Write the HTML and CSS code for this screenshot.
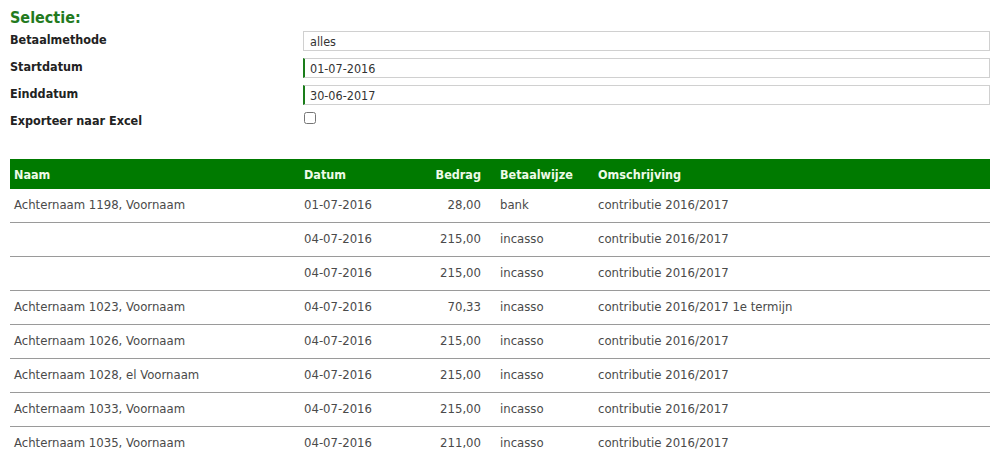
FILE: index.html
```html
<!DOCTYPE html>
<html lang="nl">
<head>
<meta charset="utf-8">
<title>Selectie</title>
<link rel="stylesheet" href="styles.css">
</head>
<body>
<h2 class="title">Selectie:</h2>
<div class="form">
  <label class="lbl">Betaalmethode</label>
  <div class="field"><input class="inp" type="text" value="alles"></div>
  <label class="lbl">Startdatum</label>
  <div class="field"><input class="inp inp-date" type="text" value="01-07-2016"></div>
  <label class="lbl">Einddatum</label>
  <div class="field"><input class="inp inp-date" type="text" value="30-06-2017"></div>
  <label class="lbl">Exporteer naar Excel</label>
  <div class="field"><input class="chk" type="checkbox"></div>
</div>
<table class="grid">
  <colgroup>
    <col class="c-naam"><col class="c-datum"><col class="c-bedrag"><col class="c-wijze"><col>
  </colgroup>
  <thead>
    <tr><th>Naam</th><th>Datum</th><th class="num">Bedrag</th><th>Betaalwijze</th><th>Omschrijving</th></tr>
  </thead>
  <tbody>
    <tr><td>Achternaam 1198, Voornaam</td><td>01-07-2016</td><td class="num">28,00</td><td>bank</td><td>contributie 2016/2017</td></tr>
    <tr><td></td><td>04-07-2016</td><td class="num">215,00</td><td>incasso</td><td>contributie 2016/2017</td></tr>
    <tr><td></td><td>04-07-2016</td><td class="num">215,00</td><td>incasso</td><td>contributie 2016/2017</td></tr>
    <tr><td>Achternaam 1023, Voornaam</td><td>04-07-2016</td><td class="num">70,33</td><td>incasso</td><td>contributie 2016/2017 1e termijn</td></tr>
    <tr><td>Achternaam 1026, Voornaam</td><td>04-07-2016</td><td class="num">215,00</td><td>incasso</td><td>contributie 2016/2017</td></tr>
    <tr><td>Achternaam 1028, el Voornaam</td><td>04-07-2016</td><td class="num">215,00</td><td>incasso</td><td>contributie 2016/2017</td></tr>
    <tr><td>Achternaam 1033, Voornaam</td><td>04-07-2016</td><td class="num">215,00</td><td>incasso</td><td>contributie 2016/2017</td></tr>
    <tr><td>Achternaam 1035, Voornaam</td><td>04-07-2016</td><td class="num">211,00</td><td>incasso</td><td>contributie 2016/2017</td></tr>
  </tbody>
</table>
</body>
</html>
```
FILE: styles.css
```css
html, body {
  margin: 0;
  padding: 0;
  background: #fff;
}
body {
  padding: 8px 8px 0 10px;
  font-family: "DejaVu Sans Condensed", "DejaVu Sans", sans-serif;
  font-size: 13px;
  color: #333;
}
.title {
  margin: 0;
  font-size: 16px;
  font-weight: bold;
  color: #237a1e;
  line-height: 19px;
}
.form {
  display: grid;
  grid-template-columns: 293px 1fr;
  row-gap: 7px;
  margin-top: 4px;
  width: 980px;
}
.lbl {
  font-weight: bold;
  color: #222;
  font-size: 12.5px;
  line-height: 20px;
  margin-top: -1px;
}
.field {
  display: flex;
  align-items: flex-start;
  height: 20px;
}
.inp {
  box-sizing: border-box;
  width: 100%;
  height: 20px;
  margin: 0;
  border: 1px solid #d0d0d0;
  padding: 0 6px;
  font-family: inherit;
  font-size: 12.5px;
  color: #333;
  background: #fff;
  outline: none;
}
.inp-date {
  border-left: 2px solid #1a7d1a;
  padding-left: 5px;
}
.chk {
  margin: 0 0 0 1px;
  width: 12px;
  height: 12px;
}
.grid {
  margin-top: 27px;
  width: 980px;
  border-collapse: collapse;
  table-layout: fixed;
}
.c-naam { width: 290px; }
.c-datum { width: 110px; }
.c-bedrag { width: 86px; }
.c-wijze { width: 98px; }
.grid th {
  background: #007a00;
  color: #eefbe8;
  font-weight: bold;
  text-align: left;
  height: 30px;
  padding: 0 4px;
  font-size: 12.5px;
}
.grid td {
  height: 31px;
  padding: 0 4px 2px 4px;
  border-bottom: 1px solid #9a9a9a;
  color: #4a4a4a;
  white-space: nowrap;
}
.grid .num {
  text-align: right;
  padding-right: 15px;
}
```
